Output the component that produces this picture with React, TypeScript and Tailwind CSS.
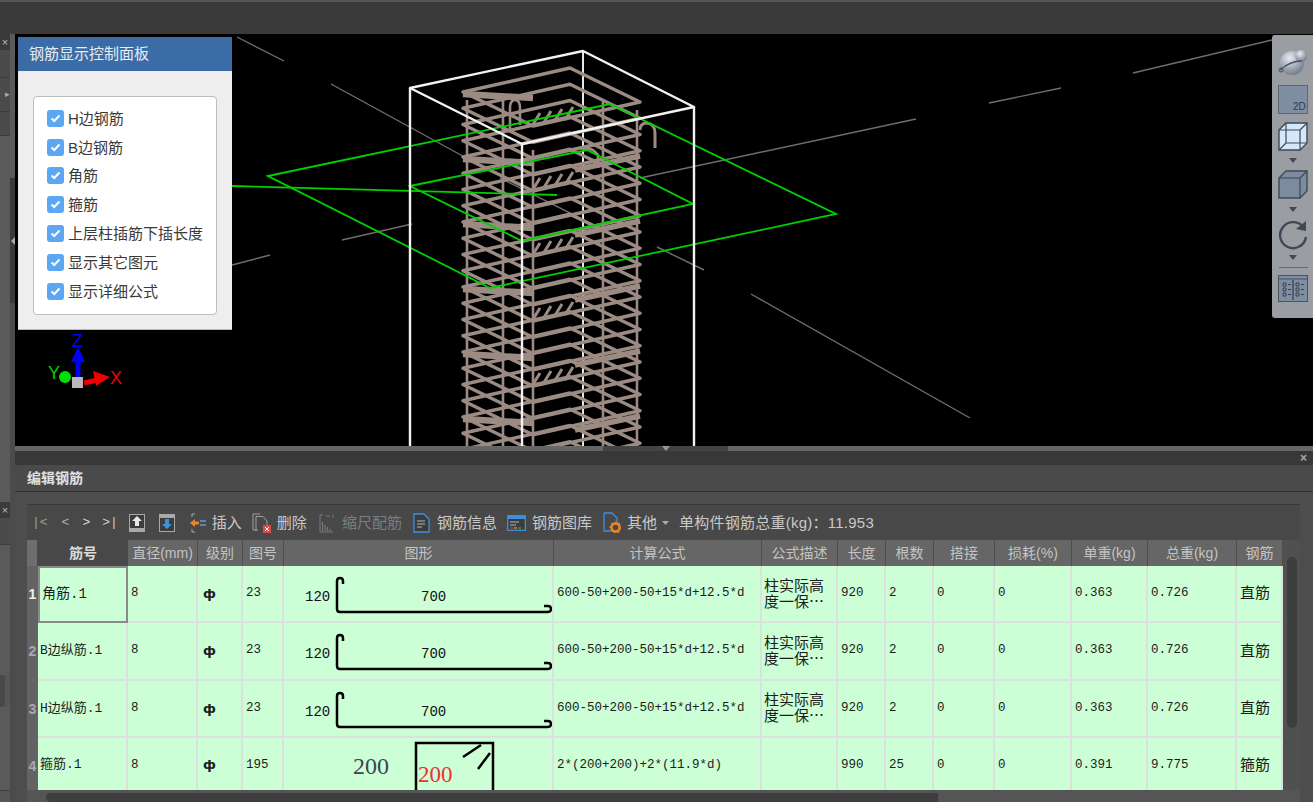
const cjk = { fontFamily: '"Liberation Sans","Noto Sans CJK SC",sans-serif' };
const mono = { fontFamily: '"Liberation Mono","Noto Sans CJK SC",monospace' };

const COLS = 'grid grid-cols-[11px_90px_70px_45px_41px_270px_208px_76px_48px_48px_61px_77px_76px_89px_46px]';

function Check({ label }: { label: string }) {
  return (
    <div className="flex h-[28.8px] items-center gap-[4px]">
      <span className="flex h-[17px] w-[17px] items-center justify-center rounded-[3px] bg-[#5ba7f4]">
        <svg width="11" height="9" viewBox="0 0 11 9"><path d="M1.5 4.5 L4.2 7 L9.5 1.5" fill="none" stroke="#fff" strokeWidth="2" /></svg>
      </span>
      <span className="text-[15px] leading-none text-[#3a3a3a]">{label}</span>
    </div>
  );
}

function Scene() {
  const ys: number[] = [];
  for (let y = 92; y < 480; y += 16.25) ys.push(y);
  const stirrup = (y: number) => `M463 ${y} L570 ${y - 24} L640 ${y + 10} L533 ${y + 34} Z`;
  return (
    <svg className="block h-full w-full" viewBox="15 34 1298 412">
      <g stroke="#6e6e6e" strokeWidth="1.4" fill="none">
        <path d="M237 37 L284 61 M331 84 L470 160 M500 178 L600 228 M751 294 L970 418 M657 247 L704 270 M1133 73 L1272 40 M989 103 L1061 88 M916 119 L640 178 M342 240 L412 224 M232 265 L270 255" />
      </g>
      <path d="M583 51 V446" stroke="#e8e8e8" strokeWidth="2" fill="none" />
      <g stroke="#9b8b83" strokeWidth="3.4" fill="none" strokeLinejoin="round">
        {ys.map((y, i) => (
          <g key={i}>
            <path d={stirrup(y)} />
            {i % 4 === 0 && <path d={`M463 ${y + 2} L533 ${y + 6}`} strokeWidth="6.5" />}
            {i % 4 === 0 && <path d={`M640 ${y + 64} L575 ${y + 78}`} strokeWidth="5.5" />}
          </g>
        ))}
        <path d="M503 100 V446 M533 150 V446 M603 100 V446 M637 110 V446 M467 100 V446" strokeWidth="2.6" />
        {[126, 191, 256, 321, 386].map((y) => (
          <path key={y} d={`M532 ${y} L540 ${y - 13} M543 ${y - 2} L551 ${y - 15} M554 ${y - 4} L562 ${y - 17} M565 ${y - 6} L573 ${y - 19}`} strokeWidth="3" />
        ))}
        <path d="M510 130 V108 Q510 100 515 100 Q520 100 520 108 V125" strokeWidth="2.6" />
        <path d="M640 130 Q640 123 647 123 Q655 124 655 133 V148" strokeWidth="3" />
        <path d="M582 150 Q590 145 598 155 V168" strokeWidth="2.6" />
      </g>
      <g stroke="#00d000" strokeWidth="1.8" fill="none">
        <path d="M268 176 L610 104 L836 214 L490 288 Z" />
        <path d="M410 186 L587 150 L693 204 L522 241 Z" />
        <path d="M232 186 L557 195" />
      </g>
      <g stroke="#f2f2f2" strokeWidth="2.4" fill="none" strokeLinejoin="round">
        <path d="M410 88 L583 51 L694 107 L522 144 Z" />
        <path d="M410 88 V446 M522 144 V446 M694 107 V446" />
      </g>
    </svg>
  );
}

function Gizmo() {
  return (
    <svg width="80" height="62" viewBox="0 0 80 62">
      <path d="M31 50 V30" stroke="#0000ff" strokeWidth="5" />
      <path d="M31 17 L38 32 L24 32 Z" fill="#0000ff" />
      <path d="M37 53 L50 50" stroke="#f00000" strokeWidth="5" />
      <path d="M63 47 L46 41 L49 56 Z" fill="#f00000" />
      <circle cx="18" cy="47" r="6" fill="#00e000" />
      <rect x="25" y="47" width="11" height="11" fill="#b8b8b8" />
      <text x="25" y="17" fontSize="18" fill="#0000ff" style={cjk}>Z</text>
      <text x="1" y="49" fontSize="18" fill="#00d000" style={cjk}>Y</text>
      <text x="63" y="54" fontSize="18" fill="#f00000" style={cjk}>X</text>
    </svg>
  );
}

function Caret() {
  return <svg className="block" width="8" height="5" viewBox="0 0 8 5"><path d="M0 0 H8 L4 5 Z" fill="#45484f" /></svg>;
}

function ViewTools() {
  return (
    <div className="absolute right-0 top-[1px] flex h-[283px] w-[41px] flex-col items-center rounded-l-[3px] bg-[#9a9da2] pl-[1px] pt-[13px]">
      <svg className="block" width="30" height="28" viewBox="0 0 30 28">
        <defs>
          <radialGradient id="s1" cx="0.4" cy="0.3" r="0.8"><stop offset="0" stopColor="#e8ecf1" /><stop offset="1" stopColor="#626e80" /></radialGradient>
        </defs>
        <circle cx="14" cy="15" r="12" fill="url(#s1)" />
        <circle cx="23" cy="8" r="6" fill="url(#s1)" />
        <path d="M2 22 Q12 13 24 13" stroke="#4a5260" strokeWidth="1.3" fill="none" />
        <circle cx="3" cy="22" r="2" fill="none" stroke="#4a5260" />
      </svg>
      <svg className="mt-[9px] block" width="30" height="29" viewBox="0 0 30 29">
        <rect x=".5" y=".5" width="29" height="28" fill="#7f8ea3" stroke="#5d6776" />
        <text x="15" y="25" fontSize="10" fill="#333a44" style={cjk}>2D</text>
      </svg>
      <svg className="mt-[8px] block" width="30" height="29" viewBox="0 0 30 29">
        <path d="M1 8 L8 1 H29 V21 L22 28 H1 Z" fill="#d5e7fb" stroke="#3f4854" strokeWidth="1.4" />
        <path d="M1 8 H22 V28 M22 8 L29 1 M8 1 V21 H29 M8 21 L1 28" fill="none" stroke="#3f4854" strokeWidth="1.2" />
      </svg>
      <div className="mt-[7px]"><Caret /></div>
      <svg className="mt-[7px] block" width="30" height="29" viewBox="0 0 30 29">
        <path d="M1 8 L8 1 H29 V21 L22 28 H1 Z" fill="#7d8ba0" stroke="#3f4854" strokeWidth="1.4" />
        <path d="M1 8 H22 V28 M22 8 L29 1" fill="none" stroke="#3f4854" strokeWidth="1.2" />
      </svg>
      <div className="mt-[8px]"><Caret /></div>
      <svg className="mt-[8px] block" width="30" height="30" viewBox="0 0 30 30">
        <path d="M26 8 A13 13 0 1 0 28 17" fill="none" stroke="#3f4854" strokeWidth="2.4" />
        <path d="M18 9 L28 11 L28 1 Z" fill="#3f4854" />
      </svg>
      <div className="mt-[5px]"><Caret /></div>
      <div className="mt-[7px] h-px w-[29px] shrink-0 bg-[#666a70]" />
      <svg className="mt-[5px] block" width="30" height="29" viewBox="0 0 30 29">
        <rect x=".5" y="2.5" width="29" height="26" fill="#7f8ea3" stroke="#4a5260" />
        <path d="M1 6 H29" stroke="#4a5260" />
        <path d="M15 7 V27" stroke="#333a44" strokeWidth="1.2" />
        <path d="M5 10 h3 v3 h-3z M5 15 h3 v3 h-3z M5 20 h3 v3 h-3z M18 10 h3 v3 h-3z M18 15 h3 v3 h-3z M18 20 h3 v3 h-3z M10 11.5 h3 M10 16.5 h3 M10 21.5 h3 M23 11.5 h3 M23 16.5 h3 M23 21.5 h3" fill="none" stroke="#333a44" strokeWidth=".9" />
      </svg>
    </div>
  );
}

function ToolText({ children, dim, cls }: { children: React.ReactNode; dim?: boolean; cls?: string }) {
  return <span className={`text-[15px] leading-none ${dim ? 'text-[#7d7d7d]' : 'text-[#c9c9c9]'} ${cls ?? ''}`}>{children}</span>;
}

function Toolbar() {
  return (
    <div className="flex h-[36px] shrink-0 items-center border-t border-[#3a3a3a] bg-[#484848] pl-[5px]" style={cjk}>
      <span className="text-[13px] text-[#9aa09a]" style={mono}>|&lt;</span>
      <span className="ml-[14px] text-[13px] text-[#b0b0b0]" style={mono}>&lt;</span>
      <span className="ml-[13px] text-[13px] text-[#d8d8d8]" style={mono}>&gt;</span>
      <span className="ml-[12px] text-[13px] text-[#d0d0d0]" style={mono}>&gt;|</span>
      <svg className="ml-[11px]" width="16" height="18" viewBox="0 0 16 18">
        <rect x=".5" y=".5" width="15" height="17" fill="#3c3c3c" stroke="#a9a9a9" />
        <rect x="1" y="14" width="14" height="3" fill="#a9a9a9" />
        <path d="M8 2 L13 7 H10 V12 H6 V7 H3 Z" fill="#e8e8e8" />
      </svg>
      <svg className="ml-[14px]" width="16" height="18" viewBox="0 0 16 18">
        <rect x=".5" y=".5" width="15" height="17" fill="#3c3c3c" stroke="#a9a9a9" />
        <rect x="1" y="1" width="14" height="3" fill="#a9a9a9" />
        <path d="M8 15 L13 10 H10 V5 H6 V10 H3 Z" fill="#3d8fe0" />
      </svg>
      <svg className="ml-[15px]" width="16" height="20" viewBox="0 0 16 20">
        <path d="M2 1 H5 M2 1 V4 M2 16 V19 H5" stroke="#a8a8a8" fill="none" />
        <path d="M0 10 L5 6 V8.5 H9 V11.5 H5 V14 Z" fill="#e8862a" />
        <path d="M10 8 H16 M10 12 H16" stroke="#5a9bd8" strokeWidth="1.6" />
      </svg>
      <ToolText cls="ml-[6px]">插入</ToolText>
      <svg className="ml-[10px]" width="20" height="20" viewBox="0 0 20 20">
        <path d="M1 1 H8 M1 1 V17 H6" stroke="#a0a0a0" fill="none" />
        <path d="M4 3.5 H11 L15 8 V12 M4 3.5 V18" stroke="#a0a0a0" fill="none" />
        <rect x="11" y="12" width="8" height="8" fill="#e04848" />
        <path d="M13 14 L17 18 M17 14 L13 18" stroke="#fff" />
      </svg>
      <ToolText cls="ml-[5px]">删除</ToolText>
      <svg className="ml-[12px]" width="15" height="20" viewBox="0 0 15 20">
        <path d="M1 2 H4 M1 2 V19 H14 M7 3 H11 M14 2 V5" stroke="#7a7a7a" fill="none" />
        <path d="M3.5 9 V18 M6 12 V18 M8.5 14 V18 M11 16 V18" stroke="#7a7a7a" strokeWidth="1.2" />
      </svg>
      <ToolText dim cls="ml-[8px]">缩尺配筋</ToolText>
      <svg className="ml-[11px]" width="17" height="20" viewBox="0 0 17 20">
        <path d="M1 1 H11 L16 6 V19 H1 Z" fill="#3b3b3b" stroke="#3d8fe0" strokeWidth="1.3" />
        <path d="M4 8 H12 M4 11 H12 M4 14 H9" stroke="#b8b8b8" />
      </svg>
      <ToolText cls="ml-[7px]">钢筋信息</ToolText>
      <svg className="ml-[10px]" width="19" height="16" viewBox="0 0 19 16">
        <rect x=".7" y=".7" width="17.6" height="14.6" fill="#3b3b3b" stroke="#3d8fe0" strokeWidth="1.3" />
        <rect x="1" y="1" width="17" height="3" fill="#3d8fe0" />
        <path d="M3 7 H12 M3 10 H9" stroke="#b8b8b8" />
        <path d="M3 13 H6" stroke="#e04848" /><path d="M7 13 H10" stroke="#e8c040" /><path d="M11 13 H14" stroke="#58b858" />
      </svg>
      <ToolText cls="ml-[6px]">钢筋图库</ToolText>
      <svg className="ml-[11px]" width="18" height="21" viewBox="0 0 18 21">
        <path d="M1 1 H9 L14 6 V11 M1 1 V19 H7" fill="none" stroke="#3d8fe0" strokeWidth="1.3" />
        <circle cx="12.5" cy="15.5" r="4" fill="none" stroke="#e8862a" strokeWidth="2.4" />
        <circle cx="12.5" cy="15.5" r="5.4" fill="none" stroke="#e8862a" strokeWidth="1.2" strokeDasharray="2 2" />
      </svg>
      <ToolText cls="ml-[6px]">其他</ToolText>
      <svg className="ml-[5px]" width="7" height="4" viewBox="0 0 7 4"><path d="M0 0 H7 L3.5 4 Z" fill="#aaa" /></svg>
      <ToolText cls="ml-[10px] tracking-[0.25px]">单构件钢筋总重(kg)：11.953</ToolText>
    </div>
  );
}

const HEADS = ['直径(mm)', '级别', '图号', '图形', '计算公式', '公式描述', '长度', '根数', '搭接', '损耗(%)', '单重(kg)', '总重(kg)', '钢筋'];

function HeaderRow() {
  return (
    <div className={`${COLS} h-[26px] bg-[#666666]`} style={cjk}>
      <div className="border-r border-[#4a4a4a] bg-[#6e6e6e]" />
      <div className="flex items-center justify-center bg-[#484848] text-[14px] font-bold text-[#dcdcdc]">筋号</div>
      {HEADS.map((h) => (
        <div key={h} className="flex items-center justify-center overflow-hidden whitespace-nowrap border-r border-[#4e4e4e] text-[14px] text-[#c4c4c4]">{h}</div>
      ))}
    </div>
  );
}

function Hook() {
  return (
    <svg className="block" width="270" height="57" viewBox="0 0 270 57">
      <path d="M59 18 V15 Q59 12 56 12 Q53 12 53 15 V43 Q53 46 56 46 H264 Q267 46 267 43 Q267 40 264 40 H260" fill="none" stroke="#000" strokeWidth="2.5" />
      <text x="21" y="35" fontSize="14" fill="#111" style={mono}>120</text>
      <text x="137" y="35" fontSize="14" fill="#111" style={mono}>700</text>
    </svg>
  );
}

function Stirrup() {
  return (
    <svg className="block" width="270" height="56" viewBox="0 0 270 56">
      <path d="M132 56 V5 H209 V56" fill="none" stroke="#000" strokeWidth="2.5" />
      <path d="M179 19 L197 7 M194 31 L206 15" stroke="#000" strokeWidth="2.5" />
      <text x="69" y="36" fontSize="24" fill="#3d4650" style={{ fontFamily: '"Liberation Serif",serif' }}>200</text>
      <text x="134" y="44" fontSize="23" fill="#f03030" style={{ fontFamily: '"Liberation Serif",serif' }}>200</text>
    </svg>
  );
}

type Row = { n: string; name: string; no: string; formula: string; desc: boolean; len: string; cnt: string; unit: string; total: string; kind: string; h: string };
const ROWS: Row[] = [
  { n: '1', name: '角筋.1', no: '23', formula: '600-50+200-50+15*d+12.5*d', desc: true, len: '920', cnt: '2', unit: '0.363', total: '0.726', kind: '直筋', h: 'h-[57px]' },
  { n: '2', name: 'B边纵筋.1', no: '23', formula: '600-50+200-50+15*d+12.5*d', desc: true, len: '920', cnt: '2', unit: '0.363', total: '0.726', kind: '直筋', h: 'h-[57.5px]' },
  { n: '3', name: 'H边纵筋.1', no: '23', formula: '600-50+200-50+15*d+12.5*d', desc: true, len: '920', cnt: '2', unit: '0.363', total: '0.726', kind: '直筋', h: 'h-[57.5px]' },
  { n: '4', name: '箍筋.1', no: '195', formula: '2*(200+200)+2*(11.9*d)', desc: false, len: '990', cnt: '25', unit: '0.391', total: '9.775', kind: '箍筋', h: 'h-[56px]' },
];

function Cell({ children, cls }: { children?: React.ReactNode; cls?: string }) {
  return <div className={`flex items-center overflow-hidden whitespace-nowrap border-b-2 border-r-2 border-[#dde1dd] text-[12.5px] text-[#1c1c1c] ${cls ?? 'pl-[3px]'}`} style={mono}>{children}</div>;
}

function DataRow({ r, i }: { r: Row; i: number }) {
  return (
    <div className={`${COLS} ${r.h} bg-[#ccffd5]`}>
      <div className={`flex items-center justify-center bg-[#636363] text-[14px] font-bold ${i === 0 ? 'text-[#f0f0f0]' : 'text-[#a8a8b8]'}`} style={cjk}>{r.n}</div>
      <div className={`flex items-center overflow-hidden whitespace-nowrap pl-[2px] text-[13px] text-[#1c1c1c] ${i === 0 ? 'border-2 border-[#8a8a8a] text-[14px]' : 'border-b-2 border-r-2 border-[#dde1dd]'}`} style={mono}>{r.name}</div>
      <Cell>8</Cell>
      <Cell cls="pl-[5px]"><span className="text-[13px] font-bold" style={{ fontFamily: '"DejaVu Sans",sans-serif' }}>ф</span></Cell>
      <Cell>{r.no}</Cell>
      <div className="overflow-hidden border-b-2 border-r-2 border-[#dde1dd]">{i === 3 ? <Stirrup /> : <Hook />}</div>
      <Cell>{r.formula}</Cell>
      <Cell cls="pl-[2px]">
        {r.desc && <div className="whitespace-pre text-[15px] leading-[16px]" style={cjk}>{'柱实际高\n度一保⋯'}</div>}
      </Cell>
      <Cell>{r.len}</Cell>
      <Cell>{r.cnt}</Cell>
      <Cell>0</Cell>
      <Cell>0</Cell>
      <Cell>{r.unit}</Cell>
      <Cell>{r.total}</Cell>
      <Cell cls="pl-[3px]"><span className="text-[15px]" style={cjk}>{r.kind}</span></Cell>
    </div>
  );
}

function LeftStrip() {
  return (
    <div className="flex h-[768px] w-[15px] shrink-0">
      <div className="flex w-[10px] flex-col bg-[#565656]">
        <div className="flex h-[16px] items-center justify-center bg-[#3a3a3a] text-[11px] leading-none text-[#bbb]" style={cjk}>×</div>
        <div className="h-[28px] border-b border-[#3d3d3d] bg-[#4b4b4b]" />
        <div className="flex h-[34px] items-center justify-end border-b border-[#3d3d3d] bg-[#4b4b4b] text-[9px] text-[#aaa]">▸</div>
        <div className="h-[24px] border-b border-[#3d3d3d] bg-[#4b4b4b]" />
        <div className="h-[366px] bg-[#5a5a5a]" />
        <div className="flex h-[16px] items-center justify-center bg-[#3a3a3a] text-[11px] leading-none text-[#bbb]" style={cjk}>×</div>
        <div className="h-[27px] border-b border-[#3d3d3d] bg-[#4b4b4b]" />
        <div className="h-[130px] bg-[#5a5a5a]" />
        <div className="h-[32px] w-[5px] rounded-r-[3px] bg-[#484848]" />
        <div className="h-[84px] border-b border-[#3d3d3d] bg-[#5a5a5a]" />
      </div>
      <div className="flex w-[5px] flex-col bg-[#4b4b4b]">
        <div className="h-[144px] bg-[#5a5a5a]" />
        <div className="flex h-[125px] items-center justify-center bg-[#3a3a3a]">
          <svg width="4" height="8" viewBox="0 0 4 8"><path d="M4 0 V8 L0 4 Z" fill="#aaa" /></svg>
        </div>
      </div>
    </div>
  );
}

export default function App() {
  return (
    <div className="flex h-[802px] w-[1313px] flex-col overflow-hidden bg-[#4d4d4d]" style={cjk}>
      <div className="h-[34px] shrink-0 border-t-2 border-[#555] bg-[#3a3a3a]" />
      <div className="flex min-h-0 flex-1">
        <LeftStrip />
        <div className="flex min-w-0 flex-1 flex-col">
          <div className="relative h-[412px] shrink-0 overflow-hidden bg-black">
            <Scene />
            <div className="absolute left-[3px] top-[3px] w-[214px] border-b border-[#bbb] bg-[#eeeeee]">
              <div className="flex h-[34px] items-center bg-[#3b6ca6] pl-[11px] text-[15px] text-[#e6ecf4]">钢筋显示控制面板</div>
              <div className="px-[15px] pb-[14px] pt-[25px]">
                <div className="rounded-[4px] border border-[#bdbdbd] bg-white px-[13px] pb-[8px] pt-[7px]">
                  {['H边钢筋', 'B边钢筋', '角筋', '箍筋', '上层柱插筋下插长度', '显示其它图元', '显示详细公式'].map((l) => <Check key={l} label={l} />)}
                </div>
              </div>
            </div>
            <div className="absolute left-[32px] top-[296px]"><Gizmo /></div>
            <ViewTools />
          </div>
          <div className="flex h-[5px] shrink-0 bg-[#666666]">
            <div className="ml-[588px] flex w-[125px] justify-center bg-[#444444]">
              <svg width="8" height="5" viewBox="0 0 8 5"><path d="M0 0 H8 L4 5 Z" fill="#999" /></svg>
            </div>
          </div>
          <div className="flex h-[14px] shrink-0 items-center justify-end bg-[#383838] pr-[6px] text-[12px] font-bold leading-none text-[#aaa]">×</div>
          <div className="flex h-[27px] shrink-0 items-center border-b border-[#333] bg-[#4a4a4a] pl-[12px] text-[14px] font-bold text-[#e2e2e2]">编辑钢筋</div>
          <div className="flex min-h-0 flex-1 flex-col overflow-hidden pl-[12px] pr-[13px] pt-[12px]">
            <Toolbar />
            <div className="flex h-[250px] shrink-0">
              <div className="w-[1256px] overflow-hidden">
                <HeaderRow />
                {ROWS.map((r, i) => <DataRow key={r.n} r={r} i={i} />)}
              </div>
              <div className="flex flex-1 justify-center bg-[#505050] pt-[17px]">
                <div className="h-[171px] w-[10px] rounded-full bg-[#3e3e3e]" />
              </div>
            </div>
            <div className="h-[12px] shrink-0 bg-[#555555] pl-[19px] pt-[3px]">
              <div className="h-[9px] w-[892px] rounded-l-full bg-[#3e3e3e]" />
            </div>
          </div>
        </div>
      </div>
    </div>
  );
}
